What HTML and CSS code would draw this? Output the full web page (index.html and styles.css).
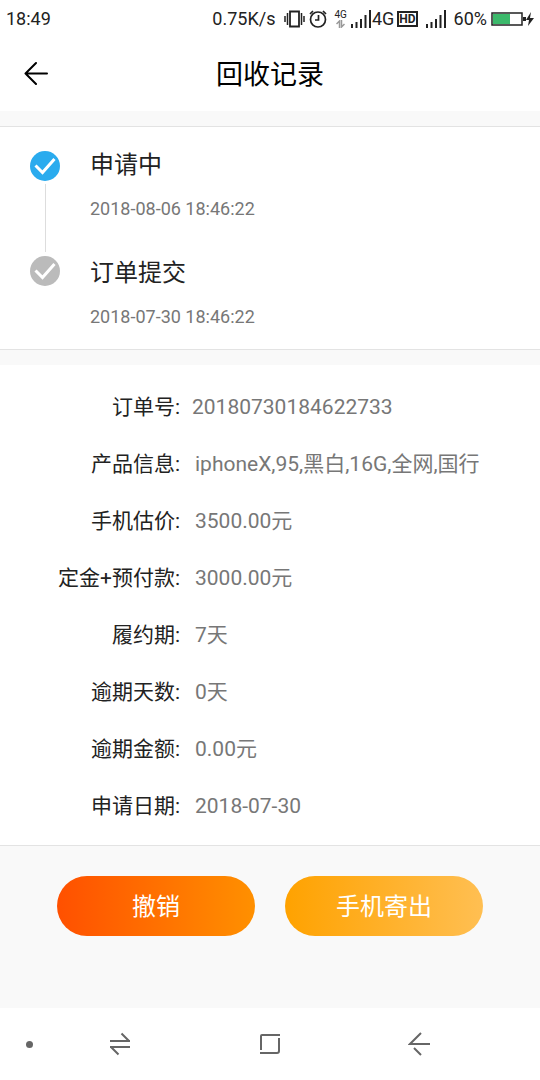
FILE: index.html
```html
<!DOCTYPE html>
<html lang="zh-CN">
<head>
    <meta charset="UTF-8">
    <meta name="viewport" content="width=device-width, initial-scale=1.0">
    <title>回收记录</title>
    <link rel="stylesheet" href="styles.css">
</head>
<body>

    <!-- Status bar -->
    <div class="status-bar">
        <span class="time">18:49</span>
        <span class="speed">0.75K/s</span>
        <svg class="vibrate" width="21" height="18" viewBox="0 0 21 18" fill="none" stroke="#222" stroke-width="2">
            <path d="M6 1.500h9v15H6z" stroke-width="1.800"/>
            <path d="M3.500 3v12M17.500 3v12" stroke-width="1.500"/>
            <path d="M1 6v6M20 6v6" stroke-width="1.500"/>
        </svg>
        <svg class="alarm" width="18" height="18" viewBox="0 0 18 18" fill="none" stroke="#222" stroke-width="1.700">
            <circle cx="9" cy="9.500" r="7.500"/>
            <path d="M9.500 5v5H6M1 4l3-3M17 4l-3-3"/>
        </svg>
        <span class="mini-net">
            <span>4G</span>
            <svg width="9" height="8" viewBox="0 0 9 8" fill="none" stroke="#999" stroke-width="1.500">
                <path d="M3.500 8V1L0.500 4M5.500 0v7l3-3"/>
            </svg>
        </span>
        <svg class="signal" width="20" height="18" viewBox="0 0 20 18" fill="#222">
            <path d="M0 14h2v4H0zM4.500 12h2v6h-2zM9 9h2v9H9zM13.500 5h2v13h-2zM18 0h2v18h-2z"/>
        </svg>
        <span class="net">4G</span>
        <span class="hd">HD</span>
        <svg class="signal second" width="20" height="18" viewBox="0 0 20 18" fill="#222">
            <path d="M0 14h2v4H0zM4.500 12h2v6h-2zM9 9h2v9H9zM13.500 5h2v13h-2zM18 0h2v18h-2z"/>
        </svg>
        <span class="percent">60%</span>
        <svg class="battery" width="43" height="14" viewBox="0 0 43 14">
            <path d="M1 1h30v12H1z" fill="none" stroke="#222" stroke-width="1.500"/>
            <path d="M2 2h17v10H2z" fill="#3cb96b"/>
            <path d="M32 5h3v4h-3z" fill="#222"/>
            <path d="M40 0l-5 8h3l-1 6 6-8h-4z" fill="#222"/>
        </svg>
    </div>

    <header class="header">
        <button class="back" type="button" aria-label="返回">
            <svg width="24" height="24" viewBox="0 0 24 24" fill="none" stroke="#000" stroke-width="2" stroke-linecap="round" stroke-linejoin="round">
                <path d="M12 2L1.500 12.500 12 23M1.500 12.500H23"/>
            </svg>
        </button>
        <h1>回收记录</h1>
    </header>

    <main>
        <!-- Progress -->
        <ol class="steps">
            <li class="step active">
                <div class="marker">
                    <svg width="30" height="30" viewBox="0 0 30 30" fill="none">
                        <circle class="dot" cx="15" cy="15" r="15"/>
                        <path d="M5.500 14.500l7 7L24.500 8" stroke="#fff" stroke-width="3"/>
                    </svg>
                </div>
                <div class="step-text">
                    <h2>申请中</h2>
                    <time>2018-08-06 18:46:22</time>
                </div>
            </li>
            <li class="step">
                <div class="marker">
                    <svg width="30" height="30" viewBox="0 0 30 30" fill="none">
                        <circle class="dot" cx="15" cy="15" r="15"/>
                        <path d="M5.500 14.500l7 7L24.500 8" stroke="#fff" stroke-width="3"/>
                    </svg>
                </div>
                <div class="step-text">
                    <h2>订单提交</h2>
                    <time>2018-07-30 18:46:22</time>
                </div>
            </li>
        </ol>

        <!-- Order details -->
        <dl class="details">
            <div class="row order-no"><dt>订单号:</dt><dd>20180730184622733</dd></div>
            <div class="row"><dt>产品信息:</dt><dd>iphoneX,95,黑白,16G,全网,国行</dd></div>
            <div class="row"><dt>手机估价:</dt><dd>3500.00元</dd></div>
            <div class="row"><dt>定金+预付款:</dt><dd>3000.00元</dd></div>
            <div class="row"><dt>履约期:</dt><dd>7天</dd></div>
            <div class="row"><dt>逾期天数:</dt><dd>0天</dd></div>
            <div class="row"><dt>逾期金额:</dt><dd>0.00元</dd></div>
            <div class="row"><dt>申请日期:</dt><dd>2018-07-30</dd></div>
        </dl>

        <div class="actions">
            <button class="btn cancel" type="button">撤销</button>
            <button class="btn send" type="button">手机寄出</button>
        </div>
    </main>

    <!-- System navigation -->
    <nav class="nav-bar">
        <button class="nav-dot" type="button" aria-label="隐藏"><span></span></button>
        <button type="button" aria-label="切换">
            <svg width="24" height="24" viewBox="0 0 24 24" fill="none" stroke="#666" stroke-width="2">
                <path d="M2 9h20M13.500 1.500L21 9M22 15H2M3 15l7.500 7.500"/>
            </svg>
        </button>
        <button type="button" aria-label="主页">
            <svg width="24" height="24" viewBox="0 0 24 24" fill="none" stroke="#666" stroke-width="2">
                <path d="M3 18V4q0-1 1-1h18M21 6v13q0 2-2 2H2"/>
            </svg>
        </button>
        <button type="button" aria-label="后退">
            <svg width="24" height="24" viewBox="0 0 24 24" fill="none" stroke="#666" stroke-width="2">
                <path d="M13 1L2 12h20M6 16l7 7"/>
            </svg>
        </button>
    </nav>

</body>
</html>
```

FILE: styles.css
```css
* {
    margin: 0;
    padding: 0;
    box-sizing: border-box;
}

body {
    display: flex;
    flex-direction: column;
    min-height: 100vh;
    font-family: Roboto, "Noto Sans CJK SC", sans-serif;
    color: #222;
    background-color: #fff;
}

button {
    border: none;
    background: none;
    font-family: inherit;
    cursor: pointer;
}

svg {
    display: block;
    flex-shrink: 0;
}

/* Status bar */
.status-bar {
    display: flex;
    align-items: center;
    height: 38px;
    padding: 0 6px;
    font-size: 18px;
    line-height: 20px;
}

.speed {
    margin-left: auto;
}

.vibrate {
    margin-left: 9px;
}

.alarm {
    margin-left: 4px;
}

.mini-net {
    display: flex;
    flex-direction: column;
    align-items: center;
    margin-left: 7px;
    font-size: 10px;
    line-height: 10px;
}

.signal {
    margin-left: 4px;
}

.net {
    margin-left: 1px;
}

.hd {
    margin-left: 3px;
    border: 2px solid #222;
    font-size: 12px;
    font-weight: bold;
    line-height: 12px;
}

.second {
    margin-left: 8px;
}

.percent {
    margin-left: 8px;
}

.battery {
    margin-left: 4px;
}

/* Header */
.header {
    display: grid;
    grid-template-columns: 48px 1fr 48px;
    align-items: center;
    height: 73px;
    padding: 0 12px;
}

.back {
    display: grid;
    place-items: center;
    height: 48px;
    padding-bottom: 4px;
}

h1 {
    font-size: 27px;
    font-weight: 400;
    line-height: 40px;
    text-align: center;
    color: #000;
}

main {
    flex: 1;
    padding-top: 15px;
    background-color: #f9f9f9;
}

/* Progress */
.steps {
    padding: 20px 30px;
    border-top: 1px solid #e3e3e3;
    border-bottom: 1px solid #e3e3e3;
    background-color: #fff;
    list-style: none;
}

.step {
    display: flex;
    gap: 30px;
}

.marker {
    display: flex;
    flex-direction: column;
    align-items: center;
    padding-top: 1px;
}

.active .marker {
    padding-top: 4px;
}

/* Line to the next step */
.active .marker::after {
    content: "";
    flex: 1;
    width: 1px;
    margin: 3px 0;
    background-color: #ddd;
}

.dot {
    fill: #bbb;
}

.active .dot {
    fill: #2aabee;
}

.step-text {
    display: flex;
    flex-direction: column;
    gap: 14px;
}

.active .step-text {
    padding-bottom: 34px;
}

h2 {
    font-size: 24px;
    font-weight: 400;
    line-height: 36px;
}

time {
    font-size: 18px;
    line-height: 24px;
    color: #777;
}

/* Order details */
.details {
    margin-top: 15px;
    padding: 14px 30px 10px;
    border-bottom: 1px solid #e3e3e3;
    background-color: #fff;
}

.row {
    display: grid;
    grid-template-columns: 150px 1fr;
    column-gap: 15px;
    font-size: 21px;
    line-height: 57px;
}

.order-no {
    column-gap: 12px;
}

dt {
    text-align: right;
}

dd {
    color: #777;
}

/* Buttons */
.actions {
    display: flex;
    gap: 30px;
    padding: 30px 57px;
}

.btn {
    flex: 1;
    height: 60px;
    padding-bottom: 4px;
    border-radius: 30px;
    font-size: 24px;
    color: #fff;
}

.cancel {
    background: linear-gradient(to right, #ff5000, #ff9000);
}

.send {
    background: linear-gradient(to right, #ffa200, #ffbf52);
}

/* System navigation */
.nav-bar {
    display: grid;
    grid-template-columns: 45px 1fr 1fr 1fr 45px;
    align-items: center;
    height: 72px;
    background-color: #fff;
}

.nav-bar button {
    display: grid;
    place-items: center;
    height: 48px;
}

.nav-bar .nav-dot {
    padding-left: 14px;
}

.nav-dot span {
    width: 7px;
    height: 7px;
    border-radius: 50%;
    background-color: #666;
}
```
